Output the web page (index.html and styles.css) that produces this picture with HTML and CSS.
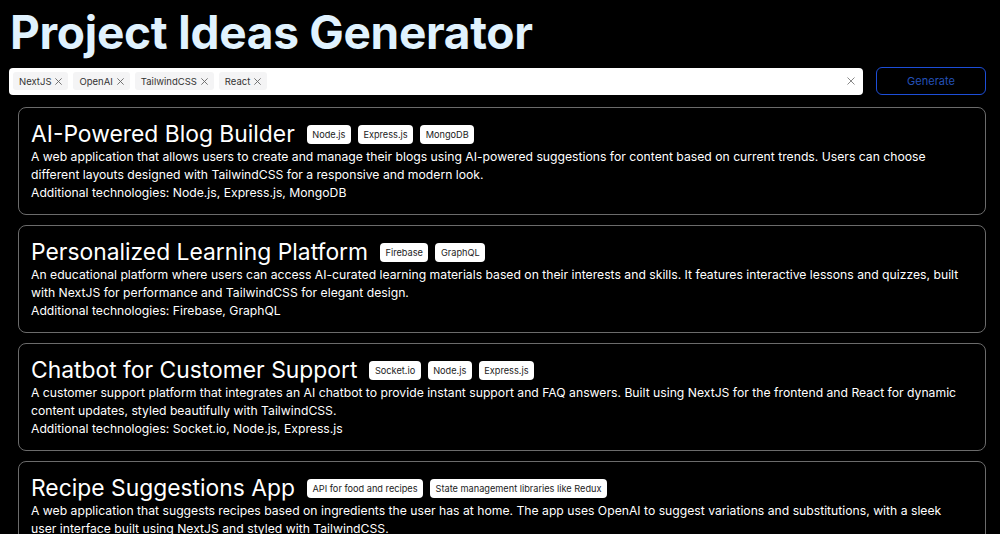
FILE: index.html
```html
<!DOCTYPE html>
<html lang="en">
<head>
<meta charset="utf-8">
<title>Project Ideas Generator</title>
<link rel="stylesheet" href="styles.css">
</head>
<body>
<main class="page">
  <h1 class="title">Project Ideas Generator</h1>
  <div class="controls">
    <div class="picker">
      <div class="chips">
        <span class="chip">NextJS <svg class="x" viewBox="0 0 10 10"><path d="M1.5 1.5l7 7M8.5 1.5l-7 7"/></svg></span>
        <span class="chip">OpenAI <svg class="x" viewBox="0 0 10 10"><path d="M1.5 1.5l7 7M8.5 1.5l-7 7"/></svg></span>
        <span class="chip">TailwindCSS <svg class="x" viewBox="0 0 10 10"><path d="M1.5 1.5l7 7M8.5 1.5l-7 7"/></svg></span>
        <span class="chip">React <svg class="x" viewBox="0 0 10 10"><path d="M1.5 1.5l7 7M8.5 1.5l-7 7"/></svg></span>
      </div>
      <svg class="clear" viewBox="0 0 10 10"><path d="M1.5 1.5l7 7M8.5 1.5l-7 7"/></svg>
    </div>
    <button class="generate">Generate</button>
  </div>
  <div class="ideas">
    <article class="card">
      <div class="card-head">
        <h2 class="card-title">AI-Powered Blog Builder</h2>
        <span class="badge">Node.js</span><span class="badge">Express.js</span><span class="badge">MongoDB</span>
      </div>
      <p class="desc">A web application that allows users to create and manage their blogs using AI-powered suggestions for content based on current trends. Users can choose different layouts designed with TailwindCSS for a responsive and modern look.</p>
      <p class="desc">Additional technologies: Node.js, Express.js, MongoDB</p>
    </article>
    <article class="card">
      <div class="card-head">
        <h2 class="card-title">Personalized Learning Platform</h2>
        <span class="badge">Firebase</span><span class="badge">GraphQL</span>
      </div>
      <p class="desc">An educational platform where users can access AI-curated learning materials based on their interests and skills. It features interactive lessons and quizzes, built with NextJS for performance and TailwindCSS for elegant design.</p>
      <p class="desc">Additional technologies: Firebase, GraphQL</p>
    </article>
    <article class="card">
      <div class="card-head">
        <h2 class="card-title">Chatbot for Customer Support</h2>
        <span class="badge">Socket.io</span><span class="badge">Node.js</span><span class="badge">Express.js</span>
      </div>
      <p class="desc">A customer support platform that integrates an AI chatbot to provide instant support and FAQ answers. Built using NextJS for the frontend and React for dynamic content updates, styled beautifully with TailwindCSS.</p>
      <p class="desc">Additional technologies: Socket.io, Node.js, Express.js</p>
    </article>
    <article class="card">
      <div class="card-head">
        <h2 class="card-title">Recipe Suggestions App</h2>
        <span class="badge">API for food and recipes</span><span class="badge">State management libraries like Redux</span>
      </div>
      <p class="desc">A web application that suggests recipes based on ingredients the user has at home. The app uses OpenAI to suggest variations and substitutions, with a sleek user interface built using NextJS and styled with TailwindCSS.</p>
      <p class="desc">Additional technologies: API for food and recipes, State management libraries like Redux</p>
    </article>
  </div>
</main>
</body>
</html>
```
FILE: styles.css
```css
* { box-sizing: border-box; }
html, body { margin: 0; padding: 0; background: #000; }
body {
  font-family: Inter, "Noto Sans", sans-serif;
  color: #fff;
}
.page {
  padding: 0 14px 10px 9px;
}
.title {
  margin: 0;
  padding: 8px 0 0 1px;
  font-size: 46px;
  line-height: 48px;
  font-weight: 700;
  color: #e0f2fe;
  letter-spacing: -0.3px;
}
.controls {
  display: flex;
  align-items: center;
  gap: 13px;
  margin-top: 11px;
  height: 28px;
}
.picker {
  flex: 1;
  height: 27px;
  background: #fff;
  border-radius: 4px;
  display: flex;
  align-items: center;
  padding: 0 7px 0 4px;
}
.chips {
  flex: 1;
  display: flex;
  gap: 5px;
}
.chip {
  background: #f4f4f5;
  color: #333;
  font-size: 9.5px;
  height: 18px;
  padding: 0 5px 0 6px;
  border-radius: 3px;
  display: inline-flex;
  align-items: center;
  gap: 3px;
}
.x, .clear {
  width: 9px;
  height: 9px;
  stroke: #666;
  stroke-width: 1;
  fill: none;
}
.clear { width: 10px; height: 10px; stroke: #888; }
.generate {
  width: 110px;
  height: 28px;
  background: #000;
  border: 1px solid #1d4ed8;
  border-radius: 6px;
  color: #2451b8;
  font-family: inherit;
  font-size: 11px;
  padding: 0;
}
.ideas {
  margin-top: 12px;
  padding-left: 9px;
  display: flex;
  flex-direction: column;
  gap: 10px;
}
.card {
  border: 1px solid #6b6b6b;
  border-radius: 8px;
  padding: 12px 16.5px 12px 12px;
  height: 108px;
}
.card-head {
  display: flex;
  align-items: center;
  height: 28px;
}
.card-title {
  margin: 0 12px 0 0;
  font-size: 22.85px;
  font-weight: 400;
  line-height: 28px;
}
.badge {
  background: #fff;
  color: #222;
  font-size: 9.2px;
  line-height: 19px;
  height: 19px;
  padding: 0 5.5px;
  border-radius: 4px;
  margin-right: 7px;
}
.desc {
  margin: 0;
  font-size: 12.2px;
  line-height: 18px;
}
```
